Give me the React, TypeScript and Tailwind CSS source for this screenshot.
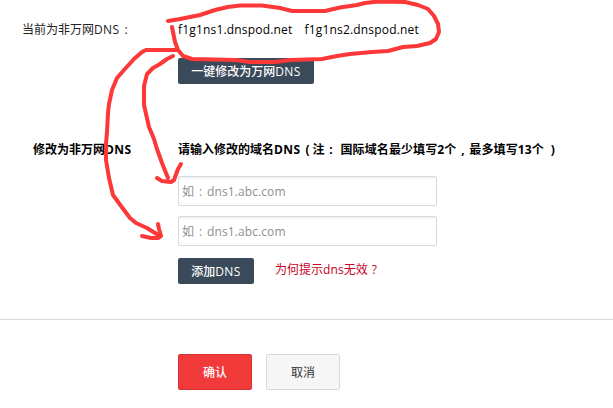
import type { ReactNode } from "react";

// Full-width punctuation: one em cell with the mark in its centre.
function Mark({ children }: { children: ReactNode }) {
  return <span className="inline-block w-[13px] text-center">{children}</span>;
}

function Dns() {
  return <span className="tracking-[0.4px]">DNS</span>;
}

function DnsInput() {
  return (
    <div className="flex h-[30px] w-[259px] items-center rounded-[2px] border border-[#d9d9d9] bg-white pl-[3px] pt-[2px] text-[12px] text-[#8f8f8f] shadow-[inset_0_2px_0_#f5f5f5]">
      <span>如</span>
      <Mark>:</Mark>
      <span className="tracking-[0.1px]">dns1.abc.com</span>
    </div>
  );
}

function Annotations() {
  return (
    <svg
      className="pointer-events-none absolute inset-0"
      width="613"
      height="408"
      viewBox="0 0 613 408"
      fill="none"
      stroke="#fc3838"
      strokeWidth="4"
      strokeLinecap="round"
      strokeLinejoin="round"
    >
      <path d="M168 21L180 19L190 17L200 15L215 10L228 7L240 5.5H262L280 8L292 11H325L340 7.500L357 5L365 3L378 1.500L405 2L418 5L428 9L434 16L438 24L439 32L436 39L430 43L417 46L403 47L388 51L372 52L350 54L337 56L322 59L290 60L275 62H250L235 60L192 59L183 56L178 50L175 42L172 27" />
      <path d="M177 50H146L142 52L134 59L124 70L117 78L112 90L109 104L108 113L107 132L106 144V160L109 178L113 195L121 206L130 218L136 223L147 228L155 233L160 236" />
      <path d="M158 224L159 229L161 236L158 238L151 238L142 236" />
      <path d="M173 56L167 59L160 64L153 68L147 74L144 86V105L149 127L154 139L157 149L162 163L168 178" />
      <path d="M157 178L162 181L171 182L174 180L178 169L181 164" />
    </svg>
  );
}

export default function App() {
  return (
    <main className="relative h-[408px] w-[613px] overflow-hidden bg-white font-['Open_Sans','Noto_Sans_CJK_SC',sans-serif] text-[12px] leading-[18px] text-black">
      <section className="flex h-[141px] pt-[21px]">
        <div className="w-[178px] shrink-0 whitespace-nowrap pl-[22px] text-[#222]">
          当前为非万网<Dns /><Mark>:</Mark>
        </div>
        <div>
          <div className="flex gap-3 whitespace-nowrap tracking-[0.18px] text-black">
            <span>f1g1ns1.dnspod.net</span>
            <span>f1g1ns2.dnspod.net</span>
          </div>
          <button className="mt-[19px] flex h-[26px] w-[136px] items-center justify-center rounded-[2px] bg-[#3b4a5b] pt-[2px] font-medium text-white">
            一键修改为万网<Dns />
          </button>
        </div>
      </section>

      <section className="flex h-[178px]">
        <div className="w-[178px] shrink-0 pl-[33px] font-bold">修改为非万网<Dns /></div>
        <div>
          <div className="flex whitespace-nowrap font-bold">
            <span>请输入修改的域名<Dns /></span>
            <span className="w-[12px] pl-[5px]">(</span>
            <span>注</span>
            <Mark>:</Mark>
            <span className="ml-[3px] tracking-[0.1px]">国际域名最少填写2个</span>
            <Mark>,</Mark>
            <span className="tracking-[0.1px]">最多填写13个</span>
            <span className="ml-[7px]">)</span>
          </div>
          <div className="mt-[17px] flex flex-col gap-[10px]">
            <DnsInput />
            <DnsInput />
          </div>
          <div className="mt-[12px] flex">
            <button className="flex h-[26px] w-[76px] items-center justify-center rounded-[2px] bg-[#3b4a5b] pt-[2px] font-medium text-white">
              添加<Dns />
            </button>
            <a className="ml-[21px] mt-[3px] whitespace-nowrap text-[#c40026]">
              为何提示<span className="tracking-[0.1px]">dns</span>无效<Mark>?</Mark>
            </a>
          </div>
        </div>
      </section>

      <footer className="flex gap-[14px] border-t border-[#d9d9d9] pl-[178px] pt-[34px]">
        <button className="flex h-9 w-[74px] items-center justify-center rounded-[2px] border border-[#d93434] bg-[#f13a3a] pt-[2px] font-medium text-white">
          确认
        </button>
        <button className="flex h-9 w-[74px] items-center justify-center rounded-[2px] border border-[#d9d9d9] bg-[#f6f6f6] pt-[2px] text-[#333]">
          取消
        </button>
      </footer>

      <Annotations />
    </main>
  );
}
